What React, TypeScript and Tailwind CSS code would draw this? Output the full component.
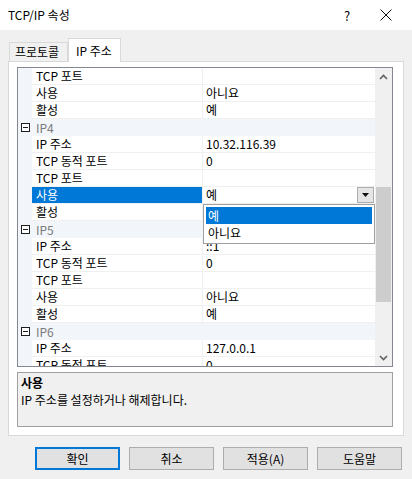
import { ReactNode } from "react";

type Row =
  | { kind: "cat"; label: string }
  | { kind: "prop"; name: string; value: string; selected?: boolean };

const rows: Row[] = [
  { kind: "prop", name: "TCP 포트", value: "" },
  { kind: "prop", name: "사용", value: "아니요" },
  { kind: "prop", name: "활성", value: "예" },
  { kind: "cat", label: "IP4" },
  { kind: "prop", name: "IP 주소", value: "10.32.116.39" },
  { kind: "prop", name: "TCP 동적 포트", value: "0" },
  { kind: "prop", name: "TCP 포트", value: "" },
  { kind: "prop", name: "사용", value: "예", selected: true },
  { kind: "prop", name: "활성", value: "" },
  { kind: "cat", label: "IP5" },
  { kind: "prop", name: "IP 주소", value: "::1" },
  { kind: "prop", name: "TCP 동적 포트", value: "0" },
  { kind: "prop", name: "TCP 포트", value: "" },
  { kind: "prop", name: "사용", value: "아니요" },
  { kind: "prop", name: "활성", value: "예" },
  { kind: "cat", label: "IP6" },
  { kind: "prop", name: "IP 주소", value: "127.0.0.1" },
  { kind: "prop", name: "TCP 동적 포트", value: "0" },
];

const MinusBox = () => (
  <svg width="9" height="9" viewBox="0 0 9 9" className="block">
    <rect x="0.5" y="0.5" width="8" height="8" fill="white" stroke="#1e1e1e" />
    <path d="M2 4.5h5" stroke="#1e1e1e" />
  </svg>
);

const Chevron = ({ up }: { up?: boolean }) => (
  <svg width="9" height="6" viewBox="0 0 9 6" className="block">
    <path
      d={up ? "M1 5L4.5 1.5L8 5" : "M1 1L4.5 4.5L8 1"}
      fill="none"
      stroke="#606060"
      strokeWidth="1.6"
    />
  </svg>
);

const GridRow = ({ row }: { row: Row }) => {
  if (row.kind === "cat") {
    return (
      <div className="flex h-[17px] bg-[#f2f5fa]">
        <div className="flex w-[14px] items-center justify-center pl-[1px]">
          <MinusBox />
        </div>
        <div className="flex items-center pl-[4px] text-[#7a7a7a]">{row.label}</div>
      </div>
    );
  }
  return (
    <div className="flex h-[17px]">
      <div className="w-[14px] bg-[#f2f5fa]" />
      <div
        className={
          row.selected
            ? "flex w-[171px] items-center border-b border-r border-[#f0f0f0] bg-[#0078d7] pl-[4px] text-white"
            : "flex w-[171px] items-center border-b border-r border-[#f0f0f0] pl-[4px]"
        }
      >
        {row.name}
      </div>
      <div className="relative flex flex-1 items-center border-b border-[#f0f0f0] pl-[3px]">
        {row.value}
        {row.selected && (
          <div className="absolute right-[1px] top-0 flex h-[16px] w-[17px] items-center justify-center border border-[#adadad] bg-[#e5e5e5]">
            <svg width="7" height="4" viewBox="0 0 7 4">
              <path d="M0 0h7L3.5 4z" fill="#111" />
            </svg>
          </div>
        )}
      </div>
    </div>
  );
};

const DialogButton = ({ children, primary }: { children: ReactNode; primary?: boolean }) => (
  <div
    className={
      primary
        ? "flex h-[23px] w-[85px] items-center justify-center border-2 border-[#0078d7] bg-[#e1e1e1]"
        : "flex h-[23px] w-[85px] items-center justify-center border border-[#adadad] bg-[#e1e1e1]"
    }
  >
    {children}
  </div>
);

export default function App() {
  return (
    <div
      className="h-[479px] w-[412px] overflow-hidden bg-[#f0f0f0] text-[12px] leading-none text-black"
      style={{ fontFamily: '"Noto Sans CJK KR", "Noto Sans", sans-serif' }}
    >
      {/* title bar */}
      <div className="flex h-[30px] items-center bg-white pl-[8px]">
        <span className="flex-1 text-[12px]">TCP/IP 속성</span>
        <span className="w-[36px] text-[13px]">?</span>
        <svg width="12" height="12" viewBox="0 0 12 12" className="mr-[20px]">
          <path d="M0.5 0.5L11.5 11.5M11.5 0.5L0.5 11.5" stroke="#111" strokeWidth="1" />
        </svg>
      </div>

      <div className="pl-[8px] pr-[8px] pt-[8px]">
        {/* tabs */}
        <div className="flex h-[23px] items-end">
          <div className="ml-[1px] flex h-[19px] w-[59px] items-center border border-b-0 border-[#d9d9d9] bg-[#f0f0f0] pl-[5px]">
            프로토콜
          </div>
          <div className="relative -mb-px flex h-[24px] w-[53px] items-center border border-b-0 border-[#d9d9d9] bg-white pl-[7px]">
            IP 주소
          </div>
        </div>

        {/* tab page */}
        <div className="flex h-[375px] w-[396px] flex-col border border-[#d9d9d9] bg-white pl-[8px] pr-[10px] pt-[5px]">
          <div className="relative flex h-[300px] border border-[#828790]">
            <div className="flex-1 overflow-hidden">
              {rows.map((r, i) => (
                <GridRow key={i} row={r} />
              ))}
            </div>

            {/* scrollbar */}
            <div className="flex w-[17px] flex-col bg-[#f0f0f0]">
              <div className="flex h-[17px] items-center justify-center">
                <Chevron up />
              </div>
              <div className="flex-1 px-[1px] pt-[102px] pb-[47px]">
                <div className="h-full bg-[#cdcdcd]" />
              </div>
              <div className="flex h-[17px] items-center justify-center">
                <Chevron />
              </div>
            </div>

            {/* open value list */}
            <div className="absolute left-[185px] top-[136px] w-[172px] border border-[#a0a0a0] bg-white p-[2px]">
              <div className="flex h-[17px] items-center bg-[#0078d7] pl-[2px] text-white">예</div>
              <div className="flex h-[17px] items-center pl-[2px]">아니요</div>
            </div>
          </div>

          {/* description */}
          <div className="mt-[5px] h-[55px] border border-[#a0a0a0] bg-[#f0f0f0] pl-[3px] pt-[4px]">
            <div className="font-bold">사용</div>
            <div className="mt-[5px]">IP 주소를 설정하거나 해제합니다.</div>
          </div>
        </div>

        {/* buttons */}
        <div className="mt-[11px] flex gap-[9px] pl-[27px]">
          <DialogButton primary>확인</DialogButton>
          <DialogButton>취소</DialogButton>
          <DialogButton>적용(A)</DialogButton>
          <DialogButton>도움말</DialogButton>
        </div>
      </div>
    </div>
  );
}
